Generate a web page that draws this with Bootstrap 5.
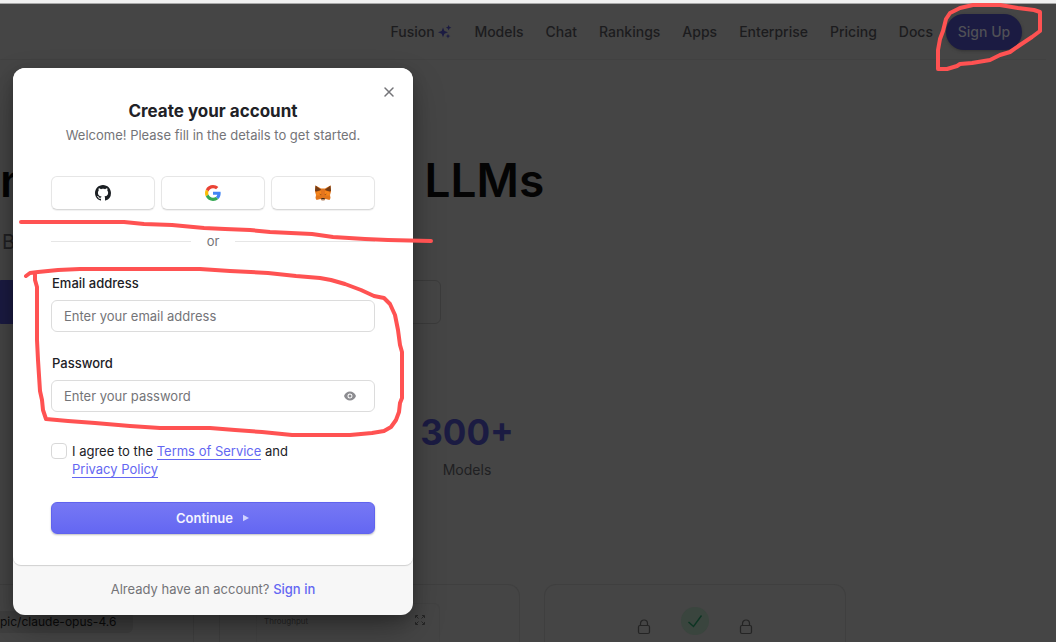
<!DOCTYPE html>
<html lang="en">
<head>
<meta charset="utf-8">
<meta name="viewport" content="width=device-width, initial-scale=1">
<title>Create your account</title>
<link href="https://cdn.jsdelivr.net/npm/bootstrap@5.3.0/dist/css/bootstrap.min.css" rel="stylesheet">
<style>
  :root { --brand: #6467f2; --dim: #454545; --dim-line: #3f3f3f; --dim-brand: #1b1b42; }
  body { font-family: Inter, "Liberation Sans", sans-serif; font-size: 13px; line-height: 18px; color: #212126; background: var(--dim); overflow: hidden; height: 100vh; display: flex; flex-direction: column; }
  .top-strip { height: 4px; flex: none; background: #f0f0f0; border-bottom: 1px solid #a8a8a8; }
  .site-nav { height: 56px; flex: none; margin-right: 10px; padding: 0 24px 0 0; border-bottom: 1px solid #414141; font-size: 14px; font-weight: 500; }
  .site-nav a { color: #1c1c1e; text-decoration: none; line-height: 20px; }
  .menu { gap: 22px; margin-right: 13px; }
  .btn-signup { height: 36px; width: 76px; padding: 0; border: 0; border-radius: 18px; background: var(--dim-brand); color: #505056; font-size: 14px; font-weight: 500; box-shadow: 0 1px 3px #333; }
  .page-body { flex: 1; min-height: 0; }
  .hero { width: 444px; color: #040404; }
  .hero h1 { font-size: 46px; line-height: 48px; font-weight: 600; margin: 96px 0 0; }
  .hero p { font-size: 20px; line-height: 28px; color: #202022; margin: 24px 0 0 2px; }
  .hero-actions { height: 44px; margin: 24px 3px 0 0; gap: 16px; }
  .hero-actions span { flex: 1; border-radius: 6px; border: 1px solid #3b3b3b; }
  .hero-actions .fill { background: var(--dim-brand); border-color: var(--dim-brand); border-radius: 0 6px 6px 0; }
  .stat { width: 120px; margin: 88px 0 0 407px; color: #202022; font-size: 14px; line-height: 20px; }
  .stat strong { font-size: 35px; line-height: 40px; font-weight: 700; color: var(--dim-brand); margin-bottom: 8px; }
  .features { flex: 1; min-height: 0; margin-top: 104px; gap: 25px; }
  .tile { border: 1px solid var(--dim-line); border-bottom: 0; border-radius: 12px 12px 0 0; color: #202022; }
  .tile-a { width: 194px; border-left: 0; border-radius: 0 12px 0 0; padding-top: 26px; }
  .tile-b { width: 301px; padding: 18px 0 0 36px; }
  .tile-c { width: 302px; gap: 30px; padding-top: 22px; margin-left: -1px; }
  .chip { width: 133px; padding: 2px 0; background: #3f3f3f; border-radius: 0 6px 6px 0; color: #0b0b0b; font-size: 12px; line-height: 18px; }
  .plot { width: 184px; height: 100%; border: 1px solid #424242; border-bottom: 0; border-radius: 6px 6px 0 0; font-size: 8px; line-height: 12px; color: #252525; padding: 11px 14px 0 7px; }
  .tick { width: 28px; height: 28px; border-radius: 14px; background: #3a453e; }
  .lock { margin-top: 12px; }

  .signup { position: absolute; left: 13px; top: 68px; width: 400px; border-radius: 12px; background: #f7f7f7; box-shadow: 0 15px 35px -5px rgba(0,0,0,.35), 0 5px 15px rgba(0,0,0,.2); }
  .signup-main { background: #fff; border-radius: 12px 12px 8px 8px; padding: 31px 38px; box-shadow: 0 1px 1px rgba(0,0,0,.16); }
  .signup h2 { font-size: 17px; line-height: 24px; font-weight: 700; margin: 0 0 3px; }
  .soft { color: #747478; }
  .x-close { position: absolute; right: 14px; top: 14px; width: 20px; height: 20px; padding: 0; border: 0; background: none; line-height: 0; }
  .socials { gap: 6px; margin-top: 32px; }
  .socials .btn { flex: 1; height: 34px; padding: 0; border: 1px solid #e6e6e6; border-bottom-color: #d8d8d8; border-radius: 6px; background: #fff; line-height: 0; box-shadow: 0 1px 1px rgba(0,0,0,.06); }
  .divider { gap: 16px; margin: 22px 0 24px; }
  .divider i { flex: 1; height: 1px; background: #e6e6e6; }
  .signup .form-label { font-weight: 500; margin: 0 0 8px 1px; display: block; }
  .signup .form-control { height: 32px; font-size: 13px; line-height: 18px; padding: 6px 12px; border: 1px solid #dcdcdc; border-radius: 6px; color: #212126; }
  .signup .form-control::placeholder { color: #747478; }
  .field { margin-bottom: 22px; }
  .eye { position: absolute; right: 18px; top: 9px; padding: 0; border: 0; background: none; line-height: 0; }
  .agree { gap: 5px; margin-top: 30px; }
  .agree .form-check-input { width: 16px; height: 16px; margin: 1px 0 0; border: 1px solid #d8d8d8; border-radius: 4px; flex: none; }
  .agree a { color: var(--brand); text-decoration: none; border-bottom: 1px solid var(--brand); }
  .go { height: 32px; margin-top: 24px; padding: 0; border: 1px solid #6063ee; border-radius: 6px; background: linear-gradient(#7678f4, #6467f2); color: #f4f4ff; font-size: 13px; font-weight: 600; gap: 9px; box-shadow: 0 1px 2px rgba(0,0,0,.25); }
  .signup-foot { padding: 15px 0 17px; }
  .signup-foot a { color: var(--brand); font-weight: 500; text-decoration: none; }
  .ink { position: absolute; left: 0; top: 0; pointer-events: none; }
</style>
</head>
<body>
<div class="top-strip"></div>
<header class="site-nav d-flex align-items-center justify-content-end">
  <nav class="menu d-flex">
    <a href="#">Fusion <svg width="14" height="14" viewBox="0 0 14 14" fill="#1b1b42" style="vertical-align:-2px"><path d="M5 2.400 6.400 6 10 7.300 6.400 8.700 5 12.300 3.700 8.700 0 7.300 3.700 6Z"/><path d="m10.600 0 .8 1.800 1.900.9-1.900.8-.8 2-.8-2-1.900-.8 1.900-.9ZM10 8.800l.7 1.600 1.600.7-1.600.7-.7 1.700-.7-1.700-1.600-.7 1.600-.7Z"/></svg></a>
    <a href="#">Models</a><a href="#">Chat</a><a href="#">Rankings</a><a href="#">Apps</a><a href="#">Enterprise</a><a href="#">Pricing</a><a href="#">Docs</a>
  </nav>
  <button class="btn-signup" type="button">Sign Up</button>
</header>

<main class="page-body d-flex flex-column">
  <section class="hero">
    <h1 class="text-nowrap">nified Interface for LLMs</h1>
    <p class="text-nowrap">Better prices</p>
    <div class="hero-actions d-flex"><span class="fill"></span><span></span></div>
  </section>
  <div class="stat d-flex flex-column align-items-center"><strong>300+</strong><span>Models</span></div>
  <section class="features d-flex">
    <div class="tile tile-a"><div class="chip text-nowrap">pic/claude-opus-4.6</div></div>
    <div class="tile tile-b">
      <div class="plot d-flex justify-content-between align-items-start"><span>Throughput</span>
        <svg width="10" height="10" viewBox="0 0 10 10" fill="none" stroke="#262626"><path d="M.5 3V.5H3M7 .5h2.500V3M9.500 7v2.500H7M3 9.500H.5V7M1 1l2.500 2.500M9 1 6.500 3.500M9 9 6.500 6.500M1 9l2.500-2.500"/></svg>
      </div>
    </div>
    <div class="tile tile-c d-flex justify-content-center align-items-start">
      <svg class="lock" width="14" height="16" viewBox="0 0 14 16" fill="none" stroke="#242424" stroke-width="1.200"><rect x="1.500" y="6.500" width="11" height="8" rx="1.500"/><path d="M3.500 6.500V4.500a3.500 3.500 0 0 1 7 0v2"/></svg>
      <div class="tick d-flex align-items-center justify-content-center"><svg width="16" height="14" viewBox="0 0 16 14" fill="none" stroke="#0d3523" stroke-width="1.400"><path d="m1.500 8 5 4.500 8-11"/></svg></div>
      <svg class="lock" width="14" height="16" viewBox="0 0 14 16" fill="none" stroke="#242424" stroke-width="1.200"><rect x="1.500" y="6.500" width="11" height="8" rx="1.500"/><path d="M3.500 6.500V4.500a3.500 3.500 0 0 1 7 0v2"/></svg>
    </div>
  </section>
</main>

<div class="signup" role="dialog" aria-labelledby="dlg-title">
  <form class="signup-main">
    <button type="button" class="x-close" aria-label="Close"><svg width="20" height="20" viewBox="0 0 20 20" stroke="#747478" stroke-width="1.500" stroke-linecap="round"><path d="m6 6 8 8M14 6l-8 8"/></svg></button>
    <div class="text-center"><h2 id="dlg-title">Create your account</h2><div class="soft">Welcome! Please fill in the details to get started.</div></div>
    <div class="socials d-flex">
      <button type="button" class="btn" aria-label="GitHub"><svg width="16" height="16" viewBox="0 0 16 16" fill="#1b1f23"><path d="M8 0C3.580 0 0 3.580 0 8c0 3.540 2.290 6.530 5.470 7.590.4.070.55-.17.55-.38 0-.19-.01-.82-.01-1.490-2.010.37-2.530-.49-2.690-.94-.09-.23-.48-.94-.82-1.130-.28-.15-.68-.52-.01-.53.63-.01 1.080.58 1.230.82.72 1.210 1.870.87 2.330.66.070-.52.280-.87.510-1.070-1.780-.2-3.640-.89-3.640-3.950 0-.87.310-1.590.820-2.150-.08-.2-.36-1.020.080-2.120 0 0 .67-.21 2.200.820.640-.18 1.320-.27 2-.27s1.360.090 2 .27c1.530-1.040 2.200-.82 2.200-.82.440 1.100.160 1.920.080 2.120.510.560.820 1.270.820 2.150 0 3.070-1.870 3.750-3.650 3.950.290.250.540.730.540 1.480 0 1.070-.01 1.930-.01 2.200 0 .21.150.46.550.38A8.010 8.010 0 0 0 16 8c0-4.420-3.580-8-8-8"/></svg></button>
      <button type="button" class="btn" aria-label="Google"><svg width="16" height="16" viewBox="0 0 48 48"><path fill="#EA4335" d="M24 9.500c3.540 0 6.710 1.220 9.210 3.600l6.850-6.850C35.900 2.380 30.470 0 24 0 14.620 0 6.510 5.380 2.560 13.220l7.980 6.190C12.430 13.720 17.740 9.500 24 9.500z"/><path fill="#4285F4" d="M46.980 24.550c0-1.570-.15-3.090-.38-4.550H24v9.020h12.940c-.58 2.960-2.260 5.480-4.780 7.180l7.730 6c4.510-4.180 7.090-10.360 7.090-17.650z"/><path fill="#FBBC05" d="M10.530 28.590c-.48-1.450-.76-2.990-.76-4.590s.27-3.140.76-4.590l-7.980-6.190C.92 16.460 0 20.120 0 24s.92 7.540 2.560 10.780z"/><path fill="#34A853" d="M24 48c6.480 0 11.930-2.130 15.890-5.810l-7.730-6c-2.150 1.450-4.920 2.300-8.160 2.300-6.260 0-11.570-4.220-13.470-9.910l-7.980 6.190C6.510 42.620 14.620 48 24 48z"/></svg></button>
      <button type="button" class="btn" aria-label="MetaMask"><svg width="16" height="16" viewBox="0 0 32 32"><path fill="#E2761B" d="M1 1 12 7h8L31 1l1 12-2 7 1 6-2 4-8-2-3 3h-4l-3-3-8 2-2-4 1-6-2-7Z"/><path fill="#763D16" d="m1 1 12 9-10 3-3-1ZM31 1l-12 9 10 3 3-1Z"/><path fill="#F6851B" d="m3 14 9-3 1 10-11 0ZM29 14l-9-3-1 10 11 0Z"/><path fill="#E4751F" d="m12 8 4 2 4-2-1 14h-6Z"/><path fill="#9a4f17" d="m8 17 5 2-1 2ZM24 17l-5 2 1 2Z"/><path fill="#3a2a22" d="M13 26h6l1 3h-8Z"/><path fill="#D7C1B3" d="m12 29 8 0-2 3h-4Z"/></svg></button>
    </div>
    <div class="divider d-flex align-items-center soft"><i></i><span>or</span><i></i></div>
    <div class="field"><label class="form-label" for="email">Email address</label><input class="form-control" id="email" type="email" placeholder="Enter your email address"></div>
    <div><label class="form-label" for="pw">Password</label>
      <div class="position-relative"><input class="form-control" id="pw" type="password" placeholder="Enter your password">
        <button type="button" class="eye" aria-label="Show password"><svg width="14" height="14" viewBox="0 0 14 14"><path fill="#8c8c90" fill-rule="evenodd" d="M1 7C2.100 4.200 4.300 2.500 7 2.500S11.900 4.200 13 7c-1.100 2.800-3.300 4.500-6 4.500S2.100 9.800 1 7ZM7 4.500a2.500 2.500 0 1 0 0 5 2.500 2.500 0 0 0 0-5Z"/><circle cx="7" cy="7" r="1.500" fill="#8c8c90"/></svg></button></div></div>
    <div class="agree d-flex align-items-start"><input class="form-check-input" type="checkbox" id="terms"><label for="terms">I agree to the <a href="#">Terms of Service</a> and<br><a href="#">Privacy Policy</a></label></div>
    <button type="submit" class="go w-100 d-flex align-items-center justify-content-center">Continue <svg width="8" height="8" viewBox="0 0 8 8" fill="#d0d1ff"><path d="M1 .7v6.600L7 4Z"/></svg></button>
  </form>
  <div class="signup-foot text-center soft">Already have an account? <a href="#">Sign in</a></div>
</div>

<svg class="ink" width="1056" height="642" viewBox="0 0 1056 642" fill="none" stroke="#ff5252" stroke-width="4" stroke-linecap="round" stroke-linejoin="round" aria-hidden="true">
  <path d="M21 222H124L144 224 172 225 204 228 225 229 250 230 270 232 312 234 333 237 365 239 388 240 431 241"/>
  <path d="M26 276 30 273 38 272 58 270 80 269H200L230 271 268 273 296 276 320 278 331 280 345 284 361 290 374 296 384 298 390 304 395 315 398 330 400 345 402 352V398L400 403 399 412 396 420 391 427 384 431 372 433 350 435H292L262 432 235 430 210 428H160L130 426 95 423 68 421 46 419 43 410 42 400 40 391 38 360 37 340V287L35 280V274"/>
  <path d="M1040 12 1034 10 1018 8 1000 5H973L960 8 950 13 946 19 943 31 940 39 938 50V69H947L957 66 960 64 972 63 990 60 1000 55 1010 52 1020 45 1032 37 1040 31Z"/>
</svg>
<script src="https://cdn.jsdelivr.net/npm/bootstrap@5.3.0/dist/js/bootstrap.bundle.min.js"></script>
</body>
</html>
